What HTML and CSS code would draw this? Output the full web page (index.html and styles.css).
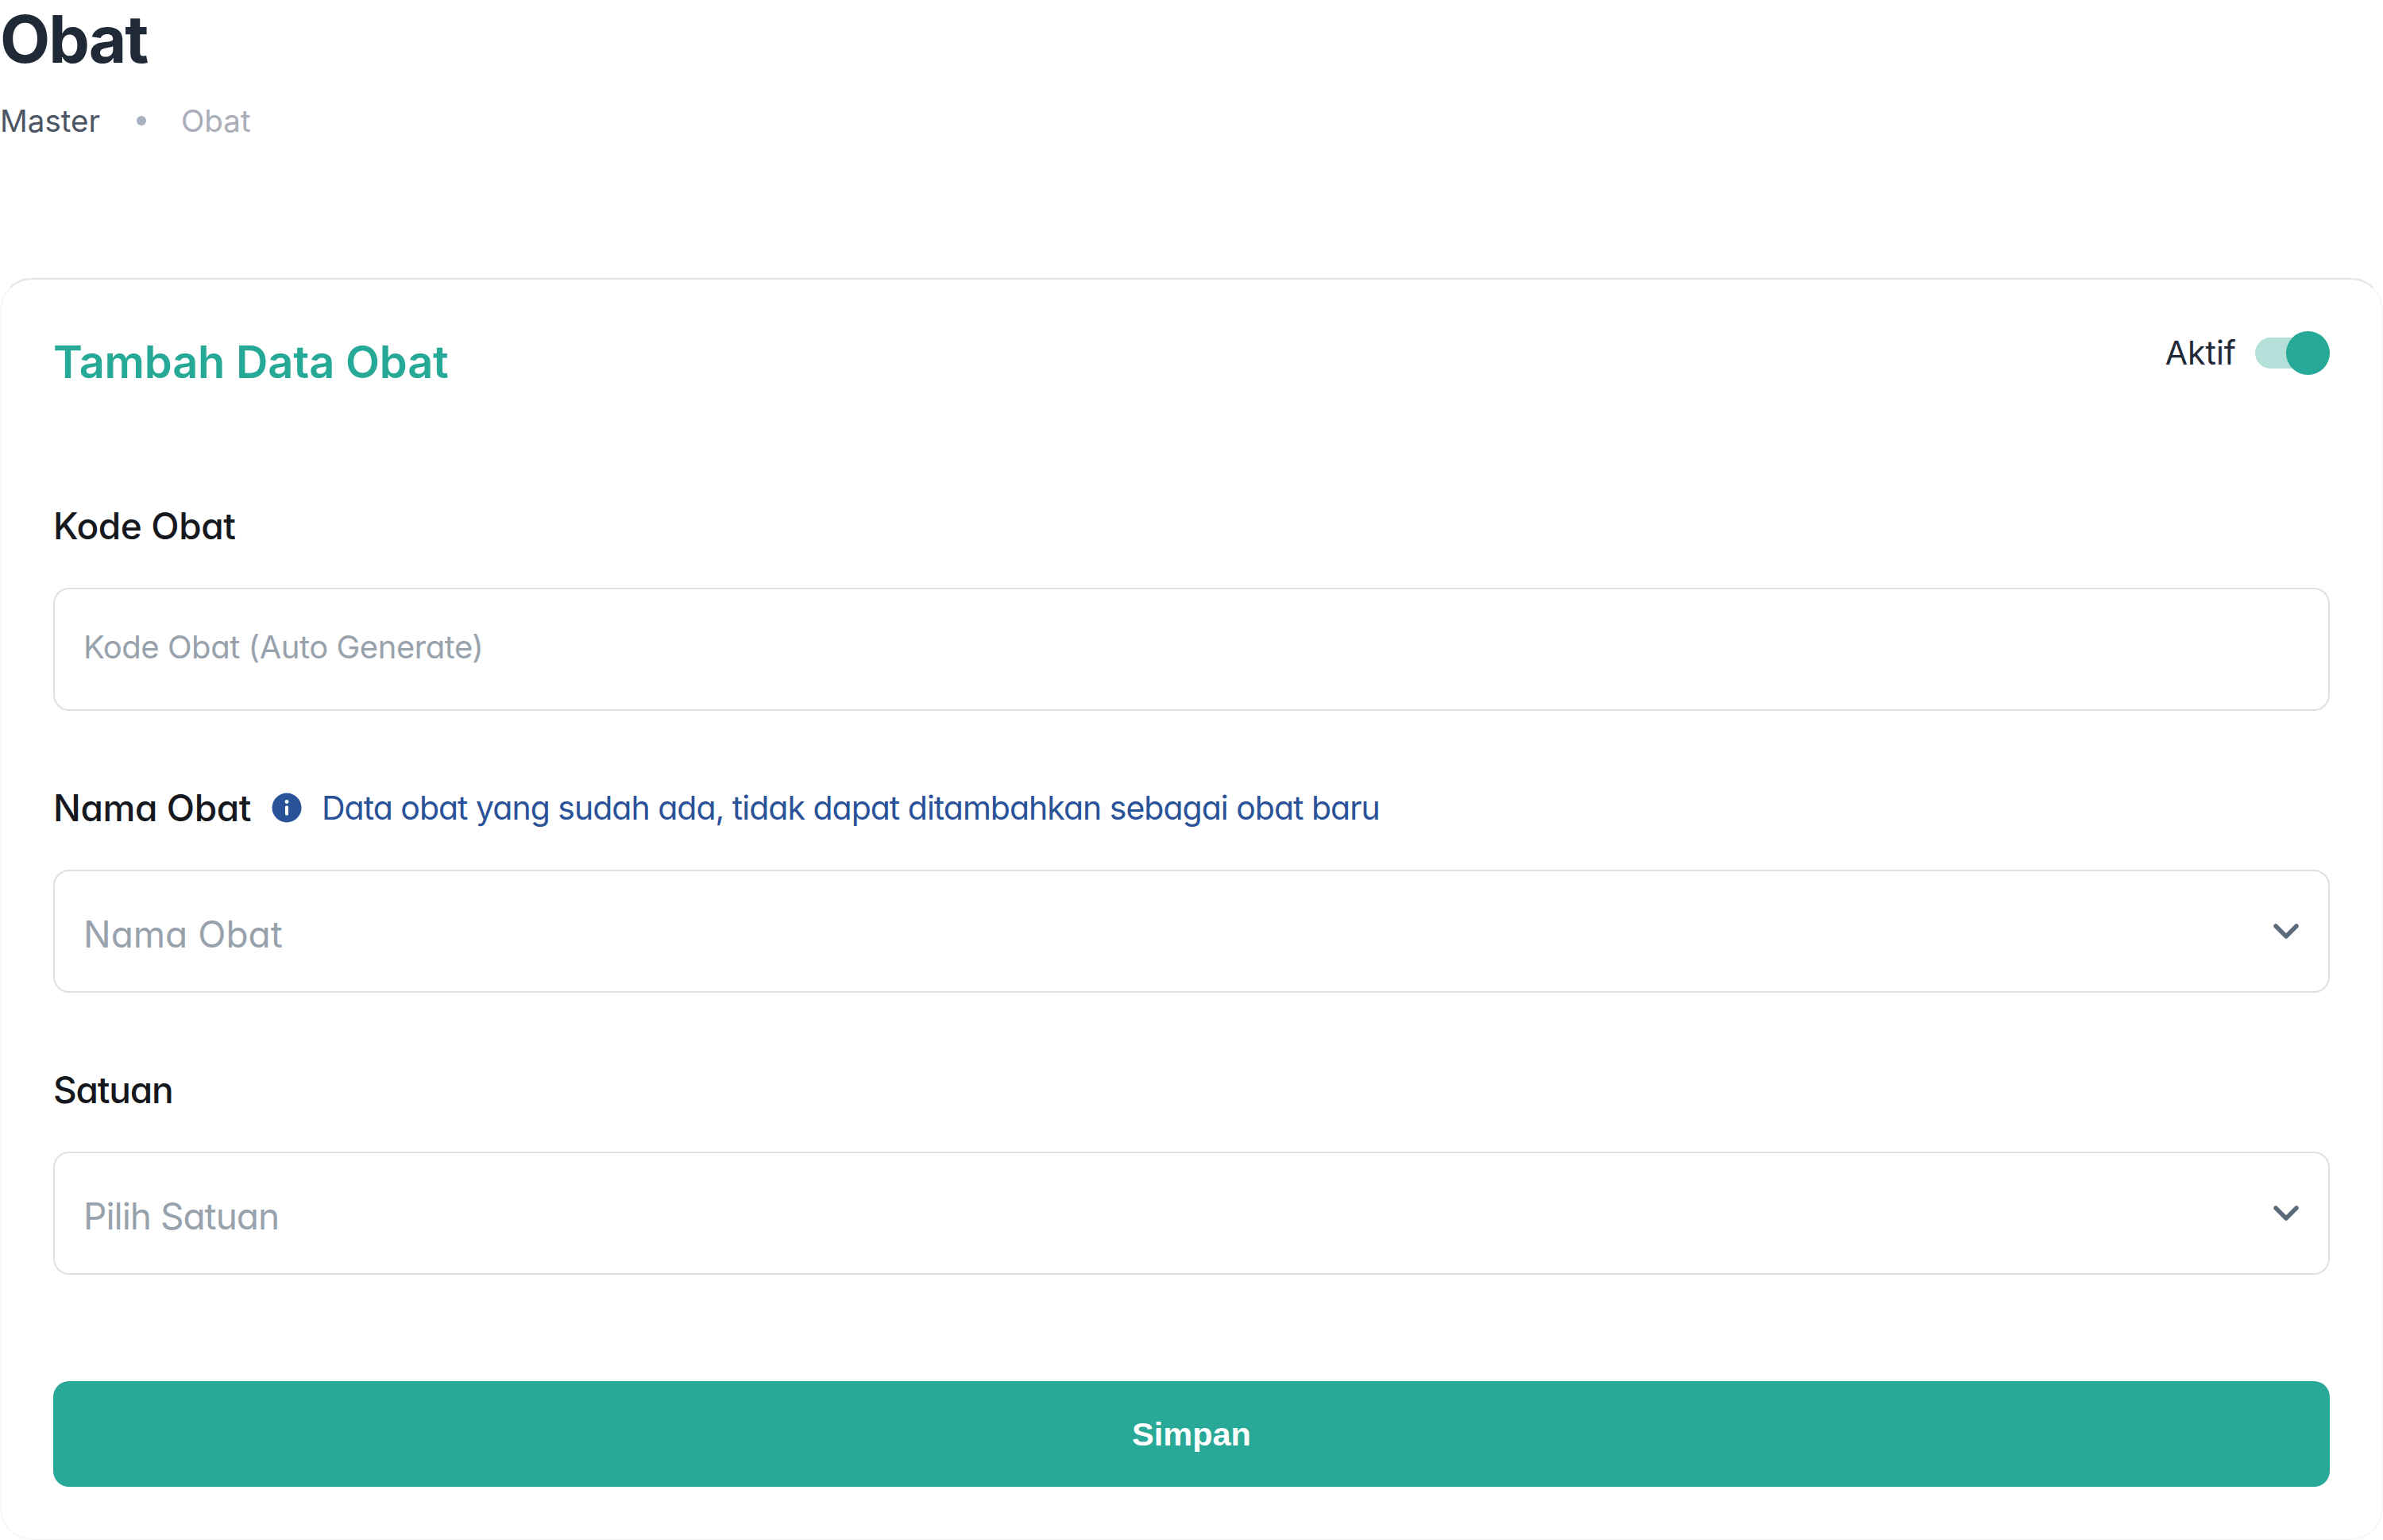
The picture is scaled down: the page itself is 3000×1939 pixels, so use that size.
FILE: index.html
```html
<!DOCTYPE html>
<html lang="id">
<head>
<meta charset="utf-8">
<title>Obat</title>
<link rel="stylesheet" href="styles.css">
</head>
<body>
<header class="page-head">
  <h1 class="page-title">Obat</h1>
  <nav class="crumbs">
    <span class="crumb">Master</span>
    <span class="crumb-dot"></span>
    <span class="crumb crumb-current">Obat</span>
  </nav>
</header>
<main class="card">
  <div class="card-head">
    <h2 class="card-title">Tambah Data Obat</h2>
    <div class="status">
      <span class="status-label">Aktif</span>
      <span class="switch"><span class="switch-thumb"></span></span>
    </div>
  </div>
  <div class="field">
    <div class="label-row"><label class="label">Kode Obat</label></div>
    <div class="control"><span class="placeholder placeholder-code">Kode Obat (Auto Generate)</span></div>
  </div>
  <div class="field">
    <div class="label-row">
      <label class="label">Nama Obat</label>
      <svg class="info-icon" viewBox="0 0 38 38" aria-hidden="true"><circle cx="19" cy="19" r="18.5" fill="#2a5298"/><rect x="17" y="16.5" width="4" height="12" rx="1.5" fill="#fff"/><circle cx="19" cy="11.5" r="2.4" fill="#fff"/></svg>
      <span class="hint">Data obat yang sudah ada, tidak dapat ditambahkan sebagai obat baru</span>
    </div>
    <div class="control">
      <span class="placeholder placeholder-name">Nama Obat</span>
      <svg class="chevron" viewBox="0 0 34 22" aria-hidden="true"><path d="M4 4 L17 17 L30 4" fill="none" stroke="#5b6b7b" stroke-width="5.5" stroke-linecap="round" stroke-linejoin="round"/></svg>
    </div>
  </div>
  <div class="field">
    <div class="label-row"><label class="label label-unit">Satuan</label></div>
    <div class="control">
      <span class="placeholder placeholder-unit">Pilih Satuan</span>
      <svg class="chevron" viewBox="0 0 34 22" aria-hidden="true"><path d="M4 4 L17 17 L30 4" fill="none" stroke="#5b6b7b" stroke-width="5.5" stroke-linecap="round" stroke-linejoin="round"/></svg>
    </div>
  </div>
  <button class="save" type="button">Simpan</button>
</main>
</body>
</html>
```
FILE: styles.css
```css
* { box-sizing: border-box; }
html, body { margin: 0; padding: 0; background: #fff; }
body { width: 3000px; height: 1939px; overflow: hidden; font-family: Inter, "Liberation Sans", sans-serif; }

.page-head { height: 350px; padding-top: 5px; }
.page-title { margin: 0; height: 90px; font-size: 82px; line-height: 90px; font-weight: 700; color: #1f2937; letter-spacing: -2px; }
.crumbs { display: flex; align-items: center; height: 60px; margin-top: 27px; font-size: 38.5px; }
.crumb { color: #4b5563; }
.crumb-current { color: #a8adb8; }
.crumb-dot { width: 12px; height: 12px; margin: 0 44px 0 46px; border-radius: 50%; background: #a8b1c0; }

.card { height: 1589px; padding: 0 65px; border: 2px solid; border-color: #e2e4e8 #f6f7f8 #f6f7f8; border-radius: 40px; background: #fff; }
.card-head { display: flex; justify-content: space-between; align-items: flex-start; height: 280px; }
.card-title { margin: 62px 0 0; font-size: 56px; line-height: 84px; font-weight: 600; color: #26a996; letter-spacing: -0.2px; }
.status { display: flex; align-items: center; gap: 24px; margin-top: 65px; }
.status-label { font-size: 41px; line-height: 55px; color: #1f2937; font-feature-settings: "cv11"; }
.switch { position: relative; display: block; width: 94px; height: 39px; border-radius: 20px; background: #b5e0d9; }
.switch-thumb { position: absolute; top: -8px; right: 0; width: 55px; height: 55px; border-radius: 50%; background: #26a996; }

.field { margin-bottom: 92px; }
.label-row { display: flex; align-items: center; height: 60px; margin-bottom: 48px; }
.label { font-size: 46px; line-height: 60px; font-weight: 500; color: #15181c; font-feature-settings: "cv11"; letter-spacing: -0.4px; }
.label-unit { letter-spacing: -1.2px; }
.info-icon { width: 38px; height: 38px; margin: 0 25px 0 26px; flex: none; }
.hint { font-size: 41px; line-height: 60px; color: #2a5298; font-feature-settings: "cv11"; letter-spacing: -1px; }

.control { display: flex; align-items: center; justify-content: space-between; height: 155px; padding: 0 36px; border: 2px solid #e0e0e0; border-radius: 20px; background: #fff; }
.placeholder { font-size: 46px; line-height: 60px; color: #98a2ad; font-feature-settings: "cv11"; margin-top: 6px; }
.placeholder-code { font-size: 40px; margin-top: -6px; letter-spacing: -0.47px; }
.placeholder-name { letter-spacing: 0; }
.placeholder-unit { letter-spacing: -1px; }
.chevron { width: 34px; height: 22px; flex: none; }

.save { display: block; width: 100%; height: 133px; margin-top: 134px; padding: 0; border: 0; border-radius: 20px; background: #28a897; color: #fff; font-family: "Liberation Sans", Arial, sans-serif; font-size: 41.5px; font-weight: 700; }
```
